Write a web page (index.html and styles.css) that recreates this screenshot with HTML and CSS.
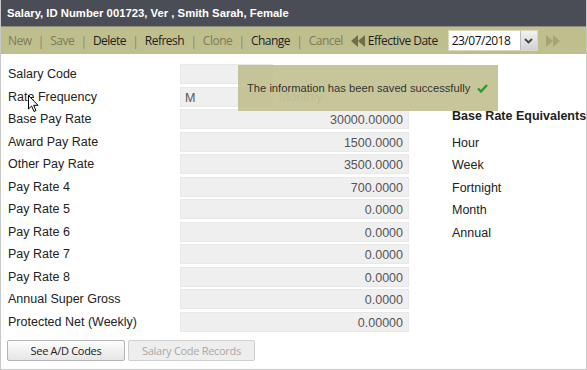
FILE: index.html
```html
<!DOCTYPE html>
<html lang="en">
<head>
  <meta charset="UTF-8">
  <title>Salary</title>
  <link rel="stylesheet" href="styles.css">
</head>
<body>
  <div class="ventana">
    <div class="titulo">Salary, ID Number 001723, Ver , Smith Sarah, Female</div>
    <div class="barra">
      <span class="accion off">New</span><span class="sep">|</span>
      <span class="accion off">Save</span><span class="sep">|</span>
      <span class="accion">Delete</span><span class="sep">|</span>
      <span class="accion">Refresh</span><span class="sep">|</span>
      <span class="accion off">Clone</span><span class="sep">|</span>
      <span class="accion">Change</span><span class="sep">|</span>
      <span class="accion off">Cancel</span>
      <svg class="flecha" width="14" height="12" viewBox="0 0 14 12"><path d="M7 0 L0 6 L7 12 Z M14 0 L7 6 L14 12 Z" fill="#6e6e4c"/></svg>
      <span class="etiqueta">Effective Date</span>
      <div class="fecha">
        <span class="fecha-valor">23/07/2018</span>
        <span class="fecha-boton"><svg width="9" height="6" viewBox="0 0 9 6"><path d="M1 1 L4.5 4.5 L8 1" stroke="#444" stroke-width="1.8" fill="none"/></svg></span>
      </div>
      <svg class="flecha" width="14" height="12" viewBox="0 0 14 12"><path d="M0 0 L7 6 L0 12 Z M7 0 L14 6 L7 12 Z" fill="#a4a476"/></svg>
    </div>

    <div class="contenido">
      <div class="formulario">
        <div class="fila"><span class="rotulo">Salary Code</span><span class="lista vacia"><i class="chev"></i></span></div>
        <div class="fila"><span class="rotulo">Rate Frequency</span><span class="lista">M<i class="chev"></i></span><span class="extra">Monthly</span></div>
        <div class="fila"><span class="rotulo">Base Pay Rate</span><span class="campo">30000.00000</span></div>
        <div class="fila"><span class="rotulo">Award Pay Rate</span><span class="campo">1500.0000</span></div>
        <div class="fila"><span class="rotulo">Other Pay Rate</span><span class="campo">3500.0000</span></div>
        <div class="fila"><span class="rotulo">Pay Rate 4</span><span class="campo">700.0000</span></div>
        <div class="fila"><span class="rotulo">Pay Rate 5</span><span class="campo">0.0000</span></div>
        <div class="fila"><span class="rotulo">Pay Rate 6</span><span class="campo">0.0000</span></div>
        <div class="fila"><span class="rotulo">Pay Rate 7</span><span class="campo">0.0000</span></div>
        <div class="fila"><span class="rotulo">Pay Rate 8</span><span class="campo">0.0000</span></div>
        <div class="fila"><span class="rotulo">Annual Super Gross</span><span class="campo">0.0000</span></div>
        <div class="fila"><span class="rotulo">Protected Net (Weekly)</span><span class="campo">0.00000</span></div>
        <div class="botones">
          <button class="boton">See A/D Codes</button>
          <button class="boton" disabled>Salary Code Records</button>
        </div>
      </div>

      <div class="equivalentes">
        <div class="eq-titulo">Base Rate Equivalents</div>
        <div class="eq">Hour</div>
        <div class="eq">Week</div>
        <div class="eq">Fortnight</div>
        <div class="eq">Month</div>
        <div class="eq">Annual</div>
      </div>
    </div>

    <div class="aviso">
      <span>The information has been saved successfully</span>
      <svg width="11" height="9" viewBox="0 0 11 9"><path d="M1 4.5 L4 7.5 L10 1" stroke="#2e9a2e" stroke-width="2.4" fill="none"/></svg>
    </div>

    <svg class="cursor" width="12" height="18" viewBox="0 0 12 18"><path d="M0.5 0.5 L0.5 14 L3.6 11 L6 16.5 L8 15.6 L5.7 10.3 L10 10.3 Z" fill="#fff" stroke="#000" stroke-width="1"/></svg>
  </div>
</body>
</html>
```

FILE: styles.css
```css
body {
  margin: 0;
  background: #fff;
  font-family: 'Liberation Sans', Arial, sans-serif;
}

.ventana {
  position: relative;
  width: 585px;
  height: 369px;
  border-right: 1px solid #c8c8c8;
  border-left: 1px solid #c8c8c8;
  border-bottom: 1px solid #c8c8c8;
  overflow: hidden;
}

.titulo {
  height: 26px;
  line-height: 26px;
  background: #4a4d56;
  color: #fff;
  font-weight: bold;
  font-size: 11.3px;
  padding-left: 7px;
  border-bottom: 1px solid #8e8f7a;
  margin: 0 -1px;
  white-space: nowrap;
}

.barra {
  height: 27px;
  background: #bfbf8e;
  display: flex;
  align-items: center;
  padding-left: 8px;
  margin: 0 -1px;
  font-family: 'Open Sans', sans-serif;
  font-size: 12px;
  letter-spacing: -0.5px;
  color: #1e1e1e;
  white-space: nowrap;
}

.barra > * {
  flex-shrink: 0;
}

.accion.off {
  color: #7b7b5e;
}

.sep {
  color: #8c8c6a;
  margin: 0 6px;
  font-size: 13px;
}

.flecha {
  margin-left: 8px;
  margin-right: 3px;
}

.etiqueta {
  margin-right: 10px;
}

.fecha {
  display: flex;
  height: 21px;
  width: 90px;
  background: #fff;
  border: 1px solid #d8d8c0;
  box-sizing: border-box;
}

.fecha-valor {
  flex: 1;
  line-height: 19px;
  padding-left: 3px;
  color: #111;
}

.fecha-boton {
  width: 16px;
  background: linear-gradient(#f2f2f2, #d2d2d2);
  border-left: 1px solid #bbb;
  display: flex;
  align-items: center;
  justify-content: center;
}

.contenido {
  display: flex;
  padding-top: 9px;
}

.formulario {
  width: 409px;
}

.fila {
  display: flex;
  align-items: center;
  height: 22.5px;
  font-size: 12.5px;
  color: #222;
  white-space: nowrap;
}

.rotulo {
  width: 172px;
  padding-left: 7px;
}

.campo, .lista {
  height: 20px;
  line-height: 20px;
  background: #efefef;
  border: 1px solid #e8e8e8;
  box-sizing: border-box;
  color: #555;
}

.campo {
  width: 229px;
  text-align: right;
  padding-right: 5px;
}

.lista {
  position: relative;
  width: 93px;
  padding-left: 4px;
}

.chev {
  position: absolute;
  right: 5px;
  top: 5px;
  width: 5px;
  height: 5px;
  border-right: 1px solid #c4c4c4;
  border-bottom: 1px solid #c4c4c4;
  transform: rotate(45deg);
}

.extra {
  margin-left: 6px;
  color: #b5b5b5;
}

.botones {
  display: flex;
  gap: 3px;
  padding: 7px 0 0 6px;
}

.boton {
  height: 21px;
  width: 118px;
  font-family: 'Open Sans', sans-serif;
  font-size: 11px;
  letter-spacing: -0.3px;
  color: #222;
  background: linear-gradient(#fcfcfc, #e6e6e6);
  border: 1px solid #b4b4b4;
  border-radius: 2px;
  padding: 0;
}

.boton:disabled {
  width: 127px;
  color: #a8a8a8;
  background: #eeeeee;
  border-color: #d0d0d0;
}

.equivalentes {
  padding-left: 43px;
  padding-top: 42px;
  font-size: 12.5px;
  color: #222;
  white-space: nowrap;
}

.eq-titulo {
  font-weight: bold;
  height: 22.5px;
  line-height: 22.5px;
  margin-bottom: 4px;
}

.eq {
  height: 22.5px;
  line-height: 22.5px;
}

.aviso {
  position: absolute;
  left: 237px;
  top: 65px;
  width: 260px;
  height: 46px;
  padding-left: 9px;
  box-sizing: border-box;
  display: flex;
  align-items: center;
  gap: 7px;
  background: rgba(190, 190, 140, 0.88);
  font-size: 11.2px;
  color: #333;
  white-space: nowrap;
}

.cursor {
  position: absolute;
  left: 27px;
  top: 95px;
}
```
